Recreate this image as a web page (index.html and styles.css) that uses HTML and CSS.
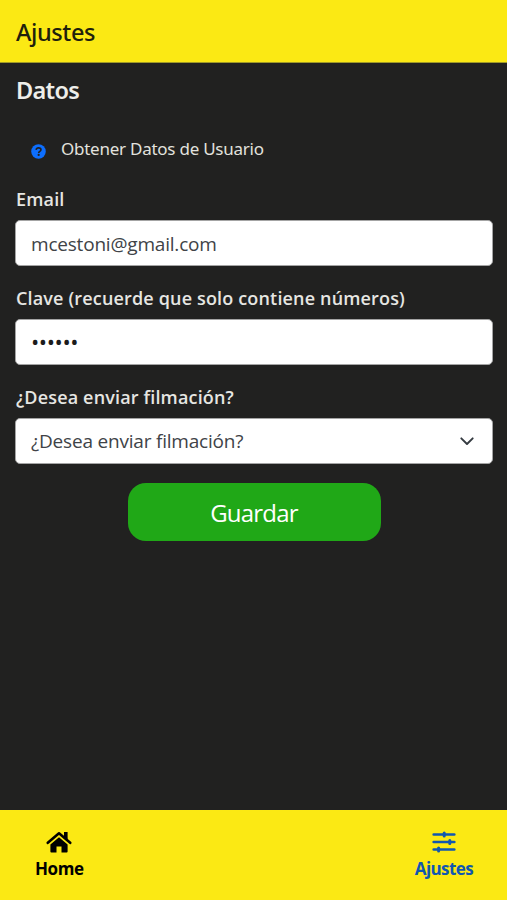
FILE: index.html
```
<!DOCTYPE html>
<html lang="es">
<head>
    <meta charset="UTF-8">
    <meta name="viewport" content="width=device-width, initial-scale=1.0">
    <title>Ajustes</title>
    <link rel="stylesheet" href="styles.css">
</head>
<body>
    <header class="header">
        <h1>Ajustes</h1>
    </header>

    <main class="content">
        <h2>Datos</h2>

        <div class="user-data">
            <svg class="help-icon" viewBox="0 0 512 512">
                <circle cx="256" cy="256" r="248" fill="#0d6efd"/>
                <path d="M174 202c8-48 37-72 84-72 48 0 82 26 82 67 0 58-78 56-78 111" fill="none" stroke="#212120" stroke-width="56"/>
                <circle cx="261" cy="374" r="38" fill="#212120"/>
            </svg>
            <span>Obtener Datos de Usuario</span>
        </div>

        <!-- Formulario de ajustes -->
        <form class="settings-form">
            <label for="email">Email</label>
            <input type="email" id="email" value="mcestoni@gmail.com">

            <label for="clave">Clave (recuerde que solo contiene números)</label>
            <input type="password" id="clave" value="123456">

            <label for="filmacion">¿Desea enviar filmación?</label>
            <div class="select-box">
                <select id="filmacion">
                    <option>¿Desea enviar filmación?</option>
                </select>
                <svg class="chevron" viewBox="0 0 16 16">
                    <path d="M2.3 5.3L8 11l5.7-5.7" fill="none" stroke="#343a40" stroke-width="1.9" stroke-linecap="round" stroke-linejoin="round"/>
                </svg>
            </div>

            <button type="button">Guardar</button>
        </form>
    </main>

    <!-- Menú inferior -->
    <nav class="bottom-nav">
        <a class="nav-item">
            <svg class="home-icon" viewBox="0 0 26 22">
                <path d="M1.8 11.8L13 2.3l11.2 9.5" fill="none" stroke="#000" stroke-width="2.6" stroke-linecap="round" stroke-linejoin="round"/>
                <path d="M18 1h3.6v8L18 6z"/>
                <path d="M13 6.2l8.6 7.3v7.1q0 .9-.9.9h-5.2v-6h-5v6H5.3q-.9 0-.9-.9v-7.1z"/>
            </svg>
            <span>Home</span>
        </a>
        <a class="nav-item active">
            <svg class="sliders-icon" viewBox="0 0 24 22">
                <path d="M1.7 3.5h20.6M1.7 11h20.6M1.7 18.5h20.6" fill="none" stroke="currentColor" stroke-width="2.7" stroke-linecap="round"/>
                <path d="M12.2 1.9v3.2M17.8 9.4v3.2M6.6 16.9v3.2" fill="none" stroke="currentColor" stroke-width="3" stroke-linecap="round"/>
            </svg>
            <span>Ajustes</span>
        </a>
    </nav>
</body>
</html>
```
FILE: styles.css
```
* {
    box-sizing: border-box;
}

body {
    font-family: "Noto Sans", "Open Sans", sans-serif;
    background-color: #212120;
    color: #eeeeea;
    margin: 0;
    height: 100vh;
    display: flex;
    flex-direction: column;
}

/* Cabecera */
.header {
    background-color: #fbe914;
    color: #20200c;
    height: 63px;
    padding: 0 16px;
    border-bottom: 1px solid #a09a28;
    display: flex;
    align-items: center;
}

h1 {
    margin: 2px 0 0;
    font-size: 23.5px;
    line-height: 32px;
    font-weight: 500;
    letter-spacing: -0.4px;
}

.content {
    flex: 1;
    padding: 11px 14px 0 15px;
}

h2 {
    margin: 0 0 0 1px;
    font-size: 23.5px;
    line-height: 32px;
    font-weight: 600;
    letter-spacing: -0.7px;
}

.user-data {
    display: flex;
    align-items: center;
    margin: 29px 0 0 16px;
    height: 28px;
    font-size: 17px;
    letter-spacing: -0.25px;
    color: #e2e2de;
}

.user-data span {
    margin-top: -2px;
}

.help-icon {
    width: 15px;
    height: 15px;
    margin: 4px 15px 0 0;
}

/* Formulario */
.settings-form {
    display: flex;
    flex-direction: column;
    margin-top: 23px;
}

label {
    margin: 0 0 7px 1px;
    font-family: "Open Sans", "Noto Sans", sans-serif;
    font-size: 18px;
    line-height: 27px;
    font-weight: 600;
    letter-spacing: 0.16px;
    white-space: nowrap;
    color: #e6e6e2;
}

input,
select {
    width: 100%;
    height: 46px;
    margin: 0 0 18.8px;
    padding: 1px 15px 0;
    border: 1px solid #a4a4a4;
    border-radius: 5px;
    background-color: #fff;
    color: #404347;
    font-family: "Open Sans", "Noto Sans", sans-serif;
    font-size: 19px;
    letter-spacing: -0.2px;
}

#clave {
    padding-top: 0;
    padding-bottom: 2px;
    color: #1c1c1c;
    font-size: 22px;
    letter-spacing: -0.4px;
}

.select-box {
    position: relative;
}

select {
    appearance: none;
    display: block;
}

.chevron {
    position: absolute;
    top: 15px;
    right: 18px;
    width: 16px;
    height: 16px;
}

button {
    align-self: center;
    width: 253px;
    height: 58px;
    margin-top: 1px;
    border: none;
    border-radius: 18px;
    background-color: #20a817;
    color: #fff;
    font-family: "Open Sans", "Noto Sans", sans-serif;
    font-size: 24px;
    letter-spacing: -0.8px;
}

/* Menú inferior */
.bottom-nav {
    height: 90px;
    padding: 21px 34px 0 35px;
    background-color: #fbe914;
    display: flex;
    justify-content: space-between;
}

.nav-item {
    display: flex;
    flex-direction: column;
    align-items: center;
    color: #000;
    font-family: "Open Sans", "Noto Sans", sans-serif;
    font-size: 17px;
    line-height: 24px;
    font-weight: 700;
    letter-spacing: -0.4px;
}

.nav-item.active {
    color: #1057b0;
    letter-spacing: -0.6px;
}

.home-icon {
    width: 26px;
    height: 22px;
    margin-bottom: 4px;
}

.sliders-icon {
    width: 24px;
    height: 22px;
    margin-bottom: 4px;
}
```
